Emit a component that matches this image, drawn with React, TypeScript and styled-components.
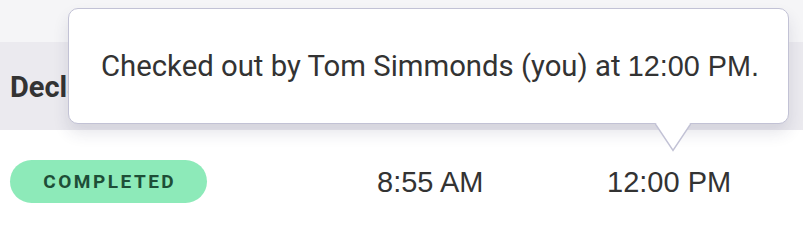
import React from "react";
import styled, { createGlobalStyle } from "styled-components";

const GlobalStyle = createGlobalStyle`
    html, body {
        margin: 0;
        padding: 0;
        background: #fff;
        font-family: Roboto, "Liberation Sans", sans-serif;
        color: #333;
    }
`;

const Page = styled.div`
    position: relative;
    width: 803px;
    height: 230px;
    overflow: hidden;
    display: flex;
    flex-direction: column;
`;

const TopBand = styled.div`
    height: 42px;
    background: #f5f5f7;
`;

const HeaderRow = styled.div`
    height: 88px;
    background: #ebeaef;
    display: flex;
    align-items: center;
    padding-left: 10px;
`;

const HeaderCell = styled.div`
    font-family: Roboto, sans-serif;
    font-weight: 700;
    font-size: 29px;
    color: #333;
    white-space: nowrap;
    padding-top: 2px;
`;

const BodyRow = styled.div`
    flex: 1;
    display: grid;
    grid-template-columns: 367px 230px 1fr;
    align-items: center;
    padding-left: 10px;
    padding-top: 3px;
`;

const Badge = styled.span<{ $bg: string; $fg: string }>`
    display: inline-flex;
    align-items: center;
    justify-content: center;
    width: 197px;
    height: 43px;
    border-radius: 22px;
    background: ${(p) => p.$bg};
    color: ${(p) => p.$fg};
    font-family: Roboto, sans-serif;
    font-weight: 700;
    font-size: 19px;
    letter-spacing: 2.5px;
    text-indent: 2.5px;
`;

const Time = styled.div`
    font-family: "Liberation Sans", Arial, sans-serif;
    font-size: 29px;
    color: #333;
    padding-top: 1px;
`;

const Tooltip = styled.div`
    position: absolute;
    top: 8px;
    left: 68px;
    width: 721px;
    height: 116px;
    box-sizing: border-box;
    background: #fff;
    border: 1.5px solid #c2c2d5;
    border-radius: 10px;
    box-shadow: 0 9px 16px rgba(40, 40, 80, 0.12);
    display: flex;
    align-items: center;
    padding-left: 32px;
    z-index: 2;
`;

const TooltipText = styled.div`
    font-family: Roboto, sans-serif;
    font-size: 29.3px;
    color: #333;
    white-space: nowrap;
`;

const TooltipTime = styled.span`
    font-family: "Liberation Sans", Arial, sans-serif;
    font-size: 28.8px;
`;

const Arrow = styled.svg`
    position: absolute;
    left: 585.5px;
    bottom: -29.25px;
`;

export default function App() {
    return (
        <>
            <GlobalStyle />
            <Page>
                <TopBand />
                <HeaderRow>
                    <HeaderCell>Declared</HeaderCell>
                </HeaderRow>
                <BodyRow>
                    <div>
                        <Badge $bg="#8deab9" $fg="#1e4e37">COMPLETED</Badge>
                    </div>
                    <Time>8:55 AM</Time>
                    <Time>12:00 PM</Time>
                </BodyRow>
                <Tooltip>
                    <TooltipText>
                        Checked out by Tom Simmonds (you) at <TooltipTime>12:00 PM.</TooltipTime>
                    </TooltipText>
                    <Arrow width="36" height="30" viewBox="0 0 36 30">
                        <path d="M0 1.5 L18 28.5 L36 1.5 Z" fill="#fff" />
                        <path d="M0 1.5 L18 28.5 L36 1.5" fill="none" stroke="#c2c2d5" strokeWidth="1.5" />
                        <rect x="1.5" y="0" width="33" height="2.4" fill="#fff" />
                    </Arrow>
                </Tooltip>
            </Page>
        </>
    );
}
